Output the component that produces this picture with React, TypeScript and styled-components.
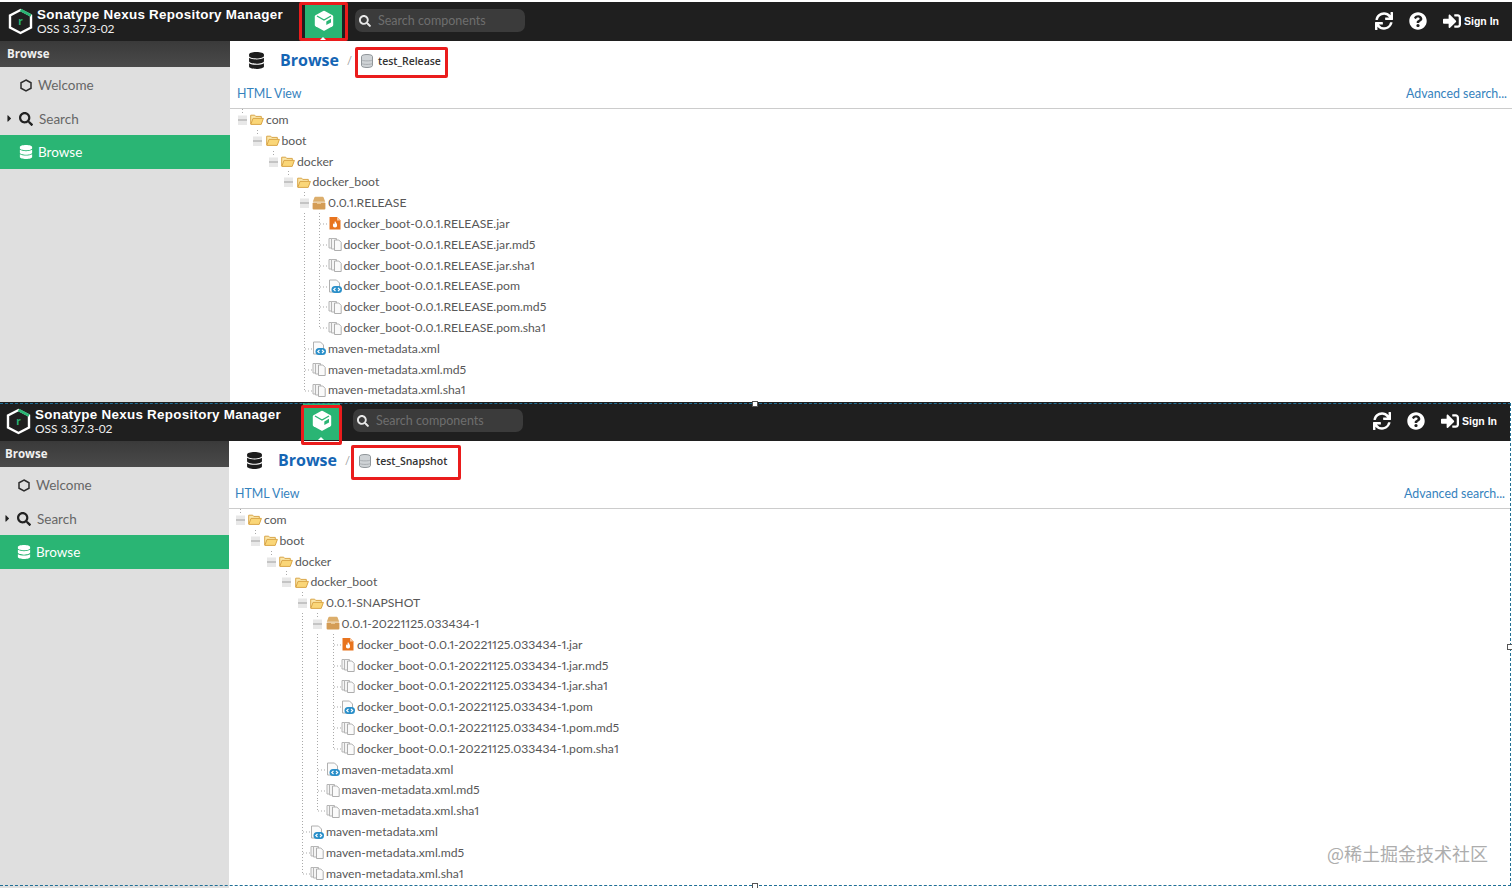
import React from "react";
import styled, { createGlobalStyle } from "styled-components";
import { FaDatabase, FaQuestionCircle, FaSearch, FaSignInAlt, FaSync, FaCaretRight } from "react-icons/fa";

const Global = createGlobalStyle`
  html, body { margin: 0; padding: 0; background: #fff; overflow: hidden; }
  body { font-family: "Lato", "Liberation Sans", sans-serif; color: #555; }
`;

const ROW_H = 20.82;
const STEP = 15.5;

const Page = styled.div`
  position: relative;
  width: 1512px;
  height: 888px;
  overflow: hidden;
  background: #fff;
`;

const Panel = styled.section<{ $h: number; $top: number; $shift: number }>`
  position: relative;
  display: flex;
  flex-direction: column;
  width: 1512px;
  height: ${(p) => p.$h}px;
  padding-top: ${(p) => p.$top}px;
  margin-left: ${(p) => -p.$shift}px;
  box-sizing: border-box;
  overflow: hidden;
`;

const Header = styled.header`
  display: flex;
  align-items: center;
  flex: 0 0 39px;
  padding-left: 8px;
  padding-right: 13px;
  background: #1f1f1f;
  color: #fff;
`;

const Brand = styled.div`
  display: flex;
  align-items: center;
  gap: 4px;
  width: 297px;
`;

const BrandText = styled.div`
  display: flex;
  flex-direction: column;
  gap: 1px;
`;

const BrandName = styled.div`
  font: 700 13.4px/14px "Liberation Sans", sans-serif;
  letter-spacing: 0.28px;
  white-space: nowrap;
  margin-top: -1px;
`;

const BrandVersion = styled.div`
  font: 400 12px/12px "Lato", sans-serif;
  color: #eee;
`;

const CubeButton = styled.div`
  position: relative;
  display: flex;
  align-items: center;
  justify-content: center;
  width: 37px;
  height: 37px;
  padding-bottom: 3px;
  box-sizing: border-box;
  margin-top: 1px;
  margin-bottom: 1px;
  margin-right: 13px;
  background: #2ab574;
  &::after {
    content: "";
    position: absolute;
    left: 15px;
    bottom: 0;
    border-left: 3px solid transparent;
    border-right: 3px solid transparent;
    border-bottom: 3px solid #fff;
  }
`;

const RedMark = styled.div<{ $l: number; $r: number; $t: number; $b: number }>`
  position: absolute;
  left: ${(p) => p.$l}px;
  right: ${(p) => p.$r}px;
  top: ${(p) => p.$t}px;
  bottom: ${(p) => p.$b}px;
  border: 3px solid #ea1c1c;
  border-radius: 2px;
  pointer-events: none;
`;

const SearchBox = styled.div`
  display: flex;
  align-items: center;
  gap: 7px;
  width: 170px;
  height: 23px;
  margin-bottom: 2px;
  padding-left: 4px;
  box-sizing: border-box;
  background: #3b3b3b;
  border-radius: 7px;
  color: #e8e8e8;
  font-size: 12px;
`;

const SearchHint = styled.span`
  font: 400 12.5px "Lato", sans-serif;
  color: #6e6e6e;
  white-space: nowrap;
`;

const HeaderTools = styled.div`
  display: flex;
  align-items: center;
  margin-left: auto;
  margin-bottom: 2px;
  color: #fff;
`;

const ToolSlot = styled.div<{ $w: number }>`
  display: flex;
  align-items: center;
  width: ${(p) => p.$w}px;
`;

const SignIn = styled.span`
  font: 700 10.5px "Liberation Sans", sans-serif;
  margin-left: 3px;
  white-space: nowrap;
`;

const Body = styled.div`
  display: flex;
  flex: 1;
  min-height: 0;
`;

const Sidebar = styled.nav<{ $w: number }>`
  flex: 0 0 ${(p) => p.$w}px;
  background: #dfdfdf;
`;

const SideHeading = styled.div`
  height: 26px;
  margin-bottom: 1.25px;
  padding-left: 7px;
  background: linear-gradient(#3a3a3a, #4a4a4a);
  color: #f0f0f0;
  font: 700 11.5px/26px "Open Sans", sans-serif;
`;

const SideItem = styled.div<{ $active?: boolean }>`
  display: flex;
  align-items: center;
  height: 33.5px;
  background: ${(p) => (p.$active ? "#2ab574" : "transparent")};
  color: ${(p) => (p.$active ? "#fff" : "#666")};
  font-size: 13.5px;
`;

const SideCaret = styled.span`
  display: flex;
  width: 19px;
  justify-content: center;
  box-sizing: border-box;
  color: #222;
  font-size: 11px;
`;

const SideIcon = styled.span<{ $active?: boolean; $gap?: number }>`
  display: flex;
  justify-content: center;
  width: 14px;
  margin-right: ${(p) => p.$gap ?? 5}px;
  color: ${(p) => (p.$active ? "#fff" : "#222")};
  font-size: 14px;
`;

const Main = styled.main<{ $trim: number }>`
  --trim: ${(p) => p.$trim}px;
  flex: 1;
  min-width: 0;
  display: flex;
  flex-direction: column;
  background: #fff;
`;

const TitleRow = styled.div`
  display: flex;
  align-items: center;
  flex: 0 0 39px;
  padding-left: calc(18px - var(--trim));
`;

const TitleIcon = styled.span`
  display: flex;
  width: 32px;
  color: #1d1d1d;
  font-size: 17px;
`;

const Title = styled.h1`
  margin: 0 0 2px;
  font: 700 16px "Open Sans", sans-serif;
  color: #1565b4;
  width: 67px;
`;

const Slash = styled.span`
  width: 14px;
  color: #999;
  font-size: 11px;
`;

const Crumb = styled.div`
  position: relative;
  display: flex;
  align-items: center;
  gap: 5px;
  color: #333;
  font: 600 10.5px "Open Sans", sans-serif;
`;

const Toolbar = styled.div`
  display: flex;
  align-items: center;
  justify-content: space-between;
  flex: 0 0 29px;
  padding: 0 5px 2px calc(7px - var(--trim));
  box-sizing: border-box;
  border-bottom: 1px solid #ccc;
`;

const ToolLink = styled.a`
  color: #3582bd;
  font-size: 12.4px;
`;

const Tree = styled.div`
  padding-left: calc(4.5px - var(--trim));
`;

const Row = styled.div`
  display: flex;
  align-items: center;
  height: ${ROW_H}px;
  white-space: nowrap;
  font-size: 12.2px;
  font-variant-numeric: proportional-nums;
  color: #585858;
`;

const Cell = styled.svg`
  flex: 0 0 ${STEP}px;
  width: ${STEP}px;
  height: ${ROW_H}px;
  display: block;
`;

const NodeIcon = styled.svg`
  flex: 0 0 14px;
  width: 14px;
  height: 14px;
  margin-right: 2px;
`;

const Frame = styled.div`
  position: absolute;
  left: 0;
  top: 403px;
  width: 1511px;
  height: 483px;
  box-sizing: border-box;
  border-top: 1px dashed #1f6f96;
  border-right: 1px dashed #1f6f96;
  border-bottom: 1px dashed #1f6f96;
  pointer-events: none;
`;

const Handle = styled.i<{ $x: number; $y: number }>`
  position: absolute;
  left: ${(p) => p.$x}px;
  top: ${(p) => p.$y}px;
  width: 4px;
  height: 4px;
  background: #fff;
  border: 1px solid #555;
`;

const Watermark = styled.div`
  position: absolute;
  left: 1327px;
  top: 841px;
  font: 400 18px/24px "Noto Sans CJK SC", sans-serif;
  color: #adadad;
  white-space: nowrap;
`;

const Dots = { stroke: "#a9a9a9", strokeWidth: 1, strokeDasharray: "1 2" };

const Guide = ({ on }: { on: boolean }) => (
  <Cell viewBox={`0 0 ${STEP} ${ROW_H}`}>{on && <line x1="7.5" x2="7.5" y1="0" y2={ROW_H} {...Dots} />}</Cell>
);

const Elbow = ({ kind }: { kind: "minus" | "tee" | "last" }) => (
  <Cell viewBox={`0 0 ${STEP} ${ROW_H}`}>
    {kind === "minus" && (
      <>
        <line x1="7.5" x2="7.5" y1="0" y2="6" {...Dots} />
        <rect x="3" y="6.5" width="9" height="9.5" fill="#e8e8e8" />
        <rect x="3" y="10" width="9" height="2" fill="#c4c4c4" />
      </>
    )}
    {kind !== "minus" && (
      <>
        <line x1="7.5" x2="7.5" y1="0" y2={kind === "tee" ? ROW_H : 11} {...Dots} />
        <line x1="8" x2="15" y1="11" y2="11" {...Dots} />
      </>
    )}
  </Cell>
);

const Folder = () => (
  <NodeIcon viewBox="0 0 14 14">
    <path d="M.7 12V3.2h4l1 1.2h5.600v2" fill="#fbe6a8" stroke="#d9a648" />
    <path d="M.8 12.400 3 6.400h10.400l-2.200 6z" fill="#fad678" stroke="#d9a648" />
  </NodeIcon>
);

const Box = () => (
  <NodeIcon viewBox="0 0 14 14">
    <path d="M.8 5.800 2.300 1.700q.2-.9 1.100-.9h7.200q.9 0 1.100.9l1.500 4.100z" fill="#dcae6c" />
    <rect x=".6" y="6.400" width="12.800" height="7.200" rx="1" fill="#d49c55" />
    <rect x="5" y="6.400" width="4" height="1.400" fill="#efd2a2" />
  </NodeIcon>
);

const Jar = () => (
  <NodeIcon viewBox="0 0 14 14">
    <path d="M1.500 1h7.500l3.500 3.500v9H1.500z" fill="#e8741e" />
    <path d="M9 1v3.500h3.500z" fill="#f8c79f" />
    <path d="M7 5c1.200 1.600 2.100 2.800 2.100 4.200A2.100 2.100 0 0 1 7 11.500a2.100 2.100 0 0 1-2.100-2.300c0-.8.400-1.400.9-1.900.1.600.3.800.6.900C6.500 6.800 6.700 5.800 7 5z" fill="#fff" />
  </NodeIcon>
);

const Docs = () => (
  <NodeIcon viewBox="0 0 14 14">
    <path d="M1 1.500h5v9.500H1z" fill="#f4f4f4" stroke="#b5b5b5" />
    <path d="M3.500 1.500h5v10.500h-5z" fill="#f4f4f4" stroke="#b5b5b5" />
    <path d="M6.500 3h4.300l2.400 2.400v8.100H6.500z" fill="#fafafa" stroke="#aeaeae" />
  </NodeIcon>
);

const Xml = () => (
  <NodeIcon viewBox="0 0 14 14">
    <path d="M1.500 1h7l3 3v9h-10z" fill="#fbfbfb" stroke="#b0b0b0" />
    <rect x="3.500" y="7" width="10.500" height="7" rx="3.500" fill="#2a8fc9" />
    <path d="M7.500 8.800 5.800 10.500l1.700 1.700M10 8.800l1.700 1.700L10 12.200" fill="none" stroke="#fff" strokeWidth="1.200" />
  </NodeIcon>
);

const RepoIcon = () => (
  <svg width="12" height="14" viewBox="0 0 12 14">
    <path d="M.5 2.500C.5 1.200 3 .5 6 .5s5.500.7 5.500 2v9c0 1.300-2.500 2-5.500 2s-5.500-.7-5.500-2z" fill="#cfd3d6" stroke="#8f9599" />
    <path d="M.8 6c1 1.200 9.400 1.200 10.400 0M.8 9.500c1 1.200 9.400 1.200 10.400 0" fill="none" stroke="#a8adb1" />
  </svg>
);

const Logo = () => (
  <svg width="25" height="27" viewBox="0 0 25 27">
    <path d="M12.500 2 23 7.500v12L12.500 25 2 19.500v-12z" fill="none" stroke="#fff" strokeWidth="2.400" />
    <path d="M12.500 2 23 7.500" fill="none" stroke="#2ab574" strokeWidth="2.600" />
    <text x="12.500" y="17" textAnchor="middle" fontFamily="Open Sans" fontWeight="700" fontSize="10" fill="#2ab574">r</text>
  </svg>
);

const Cube = () => (
  <svg width="20" height="21" viewBox="0 0 20 21">
    <path d="M10 .8q.4 0 .8.200l7.700 4.300q.7.400.7 1.200v8.500q0 .8-.7 1.200l-7.700 4.300q-.8.400-1.600 0l-7.700-4.300q-.7-.4-.7-1.200V6.500q0-.8.700-1.200L9.200 1q.4-.2.800-.2z" fill="#fff" />
    <path d="M3 6 10 10l7-4" fill="none" stroke="#2ab574" strokeWidth="1.400" />
    <path d="M12.300 11.500 17 8.800v3.600l-4.700 2.700z" fill="#2ab574" />
  </svg>
);

const Hex = () => (
  <svg width="12" height="13" viewBox="0 0 12 13">
    <path d="M6 1 11 3.800v5.400L6 12 1 9.200V3.800z" fill="none" stroke="#2c2c2c" strokeWidth="1.500" />
  </svg>
);

type Kind = "folder" | "box" | "jar" | "docs" | "xml";
type Node = { name: string; kind: Kind; children?: Node[] };

const icons: Record<Kind, React.FC> = { folder: Folder, box: Box, jar: Jar, docs: Docs, xml: Xml };

const meta = (name: string): Node[] => [
  { name, kind: "xml" },
  { name: `${name}.md5`, kind: "docs" },
  { name: `${name}.sha1`, kind: "docs" },
];

const artifact = (base: string): Node[] => [
  { name: `${base}.jar`, kind: "jar" },
  { name: `${base}.jar.md5`, kind: "docs" },
  { name: `${base}.jar.sha1`, kind: "docs" },
  { name: `${base}.pom`, kind: "xml" },
  { name: `${base}.pom.md5`, kind: "docs" },
  { name: `${base}.pom.sha1`, kind: "docs" },
];

const chain = (leaf: Node[]): Node[] => [
  {
    name: "com",
    kind: "folder",
    children: [
      {
        name: "boot",
        kind: "folder",
        children: [
          {
            name: "docker",
            kind: "folder",
            children: [{ name: "docker_boot", kind: "folder", children: leaf }],
          },
        ],
      },
    ],
  },
];

const releaseTree = chain([
  { name: "0.0.1.RELEASE", kind: "box", children: artifact("docker_boot-0.0.1.RELEASE") },
  ...meta("maven-metadata.xml"),
]);

const snapshotTree = chain([
  {
    name: "0.0.1-SNAPSHOT",
    kind: "folder",
    children: [
      { name: "0.0.1-20221125.033434-1", kind: "box", children: artifact("docker_boot-0.0.1-20221125.033434-1") },
      ...meta("maven-metadata.xml"),
    ],
  },
  ...meta("maven-metadata.xml"),
]);

const TreeNodes = ({ nodes, trail }: { nodes: Node[]; trail: boolean[] }) => (
  <>
    {nodes.map((n, i) => {
      const isLast = i === nodes.length - 1;
      const Icon = icons[n.kind];
      return (
        <React.Fragment key={n.name}>
          <Row>
            {trail.map((on, d) => (
              <Guide key={d} on={on} />
            ))}
            <Elbow kind={n.children ? "minus" : isLast ? "last" : "tee"} />
            <Icon />
            <span>{n.name}</span>
          </Row>
          {n.children && <TreeNodes nodes={n.children} trail={[...trail, !isLast]} />}
        </React.Fragment>
      );
    })}
  </>
);

type ScreenProps = {
  h: number;
  top: number;
  shift: number;
  sidebar: number;
  trim: number;
  repo: string;
  cubeMark: { $l: number; $r: number; $t: number; $b: number };
  crumbMark: { $l: number; $r: number; $t: number; $b: number };
  nodes: Node[];
};

const Screen = ({ h, top, shift, sidebar, trim, repo, cubeMark, crumbMark, nodes }: ScreenProps) => (
  <Panel $h={h} $top={top} $shift={shift}>
    <Header>
      <Brand>
        <Logo />
        <BrandText>
          <BrandName>Sonatype Nexus Repository Manager</BrandName>
          <BrandVersion>OSS 3.37.3-02</BrandVersion>
        </BrandText>
      </Brand>
      <CubeButton>
        <Cube />
        <RedMark {...cubeMark} />
      </CubeButton>
      <SearchBox>
        <FaSearch />
        <SearchHint>Search components</SearchHint>
      </SearchBox>
      <HeaderTools>
        <ToolSlot $w={34}><FaSync size={18} /></ToolSlot>
        <ToolSlot $w={34}><FaQuestionCircle size={18} /></ToolSlot>
        <ToolSlot $w={56}>
          <FaSignInAlt size={18} />
          <SignIn>Sign In</SignIn>
        </ToolSlot>
      </HeaderTools>
    </Header>
    <Body>
      <Sidebar $w={sidebar}>
        <SideHeading>Browse</SideHeading>
        <SideItem>
          <SideCaret />
          <SideIcon><Hex /></SideIcon>
          Welcome
        </SideItem>
        <SideItem>
          <SideCaret><FaCaretRight /></SideCaret>
          <SideIcon $gap={6}><FaSearch /></SideIcon>
          Search
        </SideItem>
        <SideItem $active>
          <SideCaret />
          <SideIcon $active><FaDatabase /></SideIcon>
          Browse
        </SideItem>
      </Sidebar>
      <Main $trim={trim}>
        <TitleRow>
          <TitleIcon><FaDatabase /></TitleIcon>
          <Title>Browse</Title>
          <Slash>/</Slash>
          <Crumb>
            <RepoIcon />
            {repo}
            <RedMark {...crumbMark} />
          </Crumb>
        </TitleRow>
        <Toolbar>
          <ToolLink>HTML View</ToolLink>
          <ToolLink>Advanced search...</ToolLink>
        </Toolbar>
        <Tree>
          <TreeNodes nodes={nodes} trail={[]} />
        </Tree>
      </Main>
    </Body>
  </Panel>
);

export default function App() {
  return (
    <Page>
      <Global />
      <Screen
        h={402}
        top={2}
        shift={0}
        sidebar={230}
        trim={0}
        repo="test_Release"
        cubeMark={{ $l: -6, $r: -6, $t: -1, $b: -1 }}
        crumbMark={{ $l: -6, $r: -7, $t: -7, $b: -10 }}
        nodes={releaseTree}
      />
      <Screen
        h={486}
        top={0}
        shift={2}
        sidebar={231}
        trim={1}
        repo="test_Snapshot"
        cubeMark={{ $l: -2, $r: -2, $t: 2, $b: -5 }}
        crumbMark={{ $l: -8, $r: -14, $t: -9, $b: -12 }}
        nodes={snapshotTree}
      />
      <Frame>
        <Handle $x={752} $y={-3} />
        <Handle $x={1507} $y={240} />
        <Handle $x={752} $y={479} />
      </Frame>
      <Watermark>@稀土掘金技术社区</Watermark>
    </Page>
  );
}
